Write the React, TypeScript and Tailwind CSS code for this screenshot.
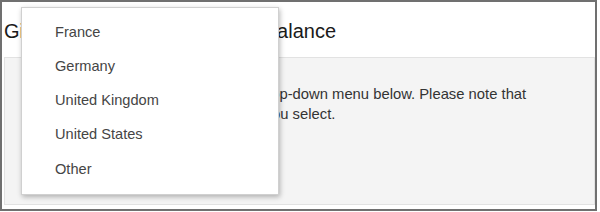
import React from "react";

const countries = ["France", "Germany", "United Kingdom", "United States", "Other"];

export default function App() {
  return (
    <div className="w-[600px] h-[212px] bg-white" style={{ fontFamily: '"Liberation Sans", Arial, sans-serif' }}>
      <div className="relative w-[597px] h-[211px] border-2 border-[#707070] bg-white flex flex-col pl-[2px]">
        <h1 className="pt-[15px] text-[20px] leading-[28px] text-[#1a1a1a] font-normal whitespace-nowrap">
          Gift Card Currency Type and Balance
        </h1>
        <div className="mt-[12px] h-[148px] border border-[#e2e2e2] bg-[#f4f4f4] pt-[27px] pl-[17px] text-[14.8px] leading-[19.5px] text-[#333]">
          <p className="whitespace-nowrap">
            Please select your country from the drop-down menu below. Please note that
            <br />
            the currency is based on the country you select.
          </p>
        </div>

        <div className="absolute left-[19px] top-[5px] w-[258px] bg-white border border-[#d0d0d0] shadow-[1px_2px_5px_rgba(0,0,0,0.28)] py-[7.5px]">
          {countries.map((c) => (
            <div key={c} className="h-[34.25px] flex items-center pl-[33px] text-[14.6px] text-[#454545]">
              {c}
            </div>
          ))}
        </div>
      </div>
    </div>
  );
}
